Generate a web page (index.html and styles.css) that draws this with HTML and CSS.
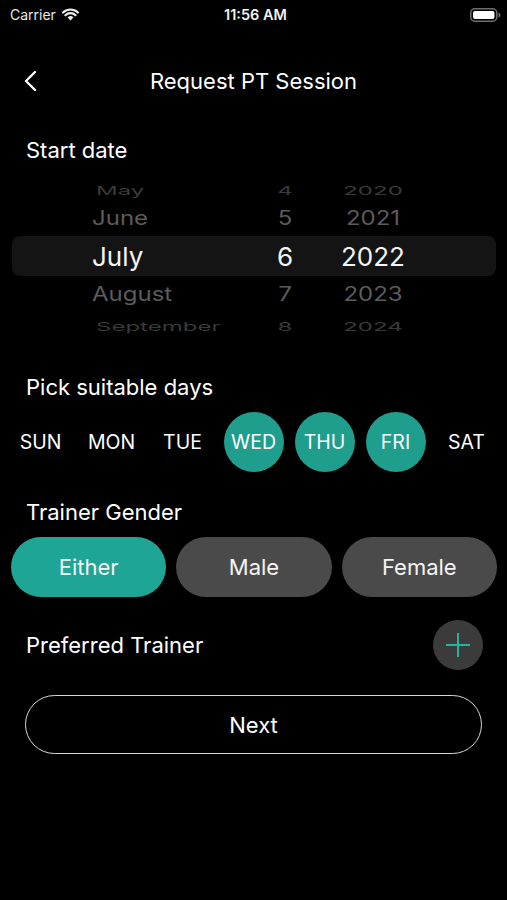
FILE: index.html
```html
<!DOCTYPE html>
<html lang="en">
    <head>
        <title>Request PT Session</title>
        <link rel="stylesheet" href="styles.css">
    </head>
    <body>
        <div class="statusbar">
            <div class="carrier">
                Carrier
                <svg class="wifi" width="17" height="13" viewBox="0 0 17 13">
                    <path d="M8.5 12.5 L5.6 9.4 A4.2 4.2 0 0 1 11.4 9.4 Z" fill="#eee"/>
                    <path d="M3.4 7.2 A7.4 7.4 0 0 1 13.6 7.2" stroke="#eee" stroke-width="2.2" fill="none" stroke-linecap="round"/>
                    <path d="M1.1 4.5 A10.6 10.6 0 0 1 15.9 4.5" stroke="#eee" stroke-width="2.2" fill="none" stroke-linecap="round"/>
                </svg>
            </div>
            <div class="time">11:56 AM</div>
            <div class="battery">
                <svg width="31" height="14" viewBox="0 0 31 14">
                    <rect x="0.75" y="0.75" width="26" height="12.5" rx="4" fill="none" stroke="#6e6e6e" stroke-width="1.5"/>
                    <rect x="3" y="3" width="21.5" height="8" rx="2" fill="#fff"/>
                    <path d="M28.5 4.5 Q30.5 5 30.5 7 Q30.5 9 28.5 9.5 Z" fill="#6e6e6e"/>
                </svg>
            </div>
        </div>

        <div class="nav">
            <svg class="back" width="14" height="22" viewBox="0 0 14 22">
                <polyline points="11,2 2,11 11,20" fill="none" stroke="#fff" stroke-width="2.4" stroke-linecap="round" stroke-linejoin="round"/>
            </svg>
            <div class="title">Request PT Session</div>
        </div>

        <div class="label first">Start date</div>

        <div class="picker">
            <div class="prow far top"><span class="m">May</span><span class="d">4</span><span class="y">2020</span></div>
            <div class="prow near"><span class="m">June</span><span class="d">5</span><span class="y">2021</span></div>
            <div class="prow current"><span class="m">July</span><span class="d">6</span><span class="y">2022</span></div>
            <div class="prow near"><span class="m">August</span><span class="d">7</span><span class="y">2023</span></div>
            <div class="prow far bottom"><span class="m">September</span><span class="d">8</span><span class="y">2024</span></div>
        </div>

        <div class="label days-label">Pick suitable days</div>
        <div class="days">
            <div class="day">SUN</div>
            <div class="day">MON</div>
            <div class="day">TUE</div>
            <div class="day on">WED</div>
            <div class="day on">THU</div>
            <div class="day on">FRI</div>
            <div class="day">SAT</div>
        </div>

        <div class="label gender-label">Trainer Gender</div>
        <div class="genders">
            <div class="gender on">Either</div>
            <div class="gender">Male</div>
            <div class="gender">Female</div>
        </div>

        <div class="trainer">
            <div class="trainer-text">Preferred Trainer</div>
            <div class="add">
                <svg width="26" height="26" viewBox="0 0 26 26">
                    <line x1="13" y1="1" x2="13" y2="25" stroke="#22b3a1" stroke-width="2"/>
                    <line x1="1" y1="13" x2="25" y2="13" stroke="#22b3a1" stroke-width="2"/>
                </svg>
            </div>
        </div>

        <div class="next">Next</div>
    </body>
</html>
```

FILE: styles.css
```css
body {
    margin: 0;
    background-color: #000;
    color: #f2f2f2;
    font-family: Inter, "Noto Sans", sans-serif;
    width: 507px;
    height: 900px;
    overflow: hidden;
}

.statusbar {
    height: 28px;
    display: flex;
    align-items: center;
    justify-content: space-between;
    padding: 0 6px 0 10px;
    font-size: 14px;
}
.carrier {
    display: flex;
    align-items: center;
    gap: 6px;
    width: 120px;
    color: #e8e8e8;
}
.time {
    font-weight: 600;
    font-size: 14.5px;
}
.battery {
    width: 120px;
    display: flex;
    justify-content: flex-end;
    padding-top: 1px;
}

.nav {
    margin-top: 28px;
    height: 50px;
    display: flex;
    align-items: center;
    padding-left: 24px;
}
.back {
    flex: none;
}
.title {
    flex: 1;
    text-align: center;
    font-size: 22px;
    margin-right: 38px;
    color: #fff;
}

.label {
    font-size: 22px;
    line-height: 28px;
    padding-left: 26px;
    color: #fff;
}
.first {
    margin-top: 30px;
}

.picker {
    margin-top: 12px;
    display: flex;
    flex-direction: column;
}
.prow {
    display: grid;
    grid-template-columns: 170px 46px 128px;
    align-items: center;
    padding-left: 80px;
    font-size: 26px;
    margin: 0 11px 0 12px;
}
.prow .d, .prow .y {
    text-align: center;
}
.prow .y {
    padding-left: 2px;
}
.far {
    height: 24px;
    color: #3a3a3a;
}
.far span {
    display: block;
    transform: scaleY(0.5);
    font-size: 24px;
}
.far .m {
    padding-left: 4px;
}
.near {
    height: 36px;
    color: #5c5c5c;
}
.near span {
    display: block;
    transform: scaleY(0.82);
    font-size: 24px;
}
.current {
    height: 40px;
    background-color: #141414;
    border-radius: 8px;
    color: #f4f4f4;
}
.bottom {
    height: 22px;
}

.days-label {
    margin-top: 39px;
}
.days {
    margin-top: 11px;
    display: grid;
    grid-template-columns: repeat(7, 71px);
    padding: 0 5px;
}
.day {
    width: 60px;
    height: 60px;
    margin: 0 auto;
    border-radius: 50%;
    display: flex;
    align-items: center;
    justify-content: center;
    font-size: 19.5px;
    color: #fff;
}
.day.on {
    background-color: #1f9d8d;
}

.gender-label {
    margin-top: 26px;
}
.genders {
    margin-top: 11px;
    display: flex;
    gap: 10px;
    padding: 0 10px 0 11px;
}
.gender {
    flex: 1;
    height: 60px;
    border-radius: 30px;
    background-color: #4a4a4a;
    display: flex;
    align-items: center;
    justify-content: center;
    font-size: 22px;
    color: #f4f4f4;
}
.gender.on {
    background-color: #1fa595;
}

.trainer {
    margin-top: 23px;
    height: 50px;
    display: flex;
    align-items: center;
    justify-content: space-between;
    padding: 0 24px 0 26px;
}
.trainer-text {
    font-size: 22px;
    color: #fff;
}
.add {
    width: 50px;
    height: 50px;
    border-radius: 50%;
    background-color: #3b3b3b;
    display: flex;
    align-items: center;
    justify-content: center;
}

.next {
    margin: 25px 25px 0 25px;
    height: 57px;
    border: 1.5px solid #d8d8d8;
    border-radius: 30px;
    display: flex;
    align-items: center;
    justify-content: center;
    font-size: 22px;
    color: #fff;
}
```
